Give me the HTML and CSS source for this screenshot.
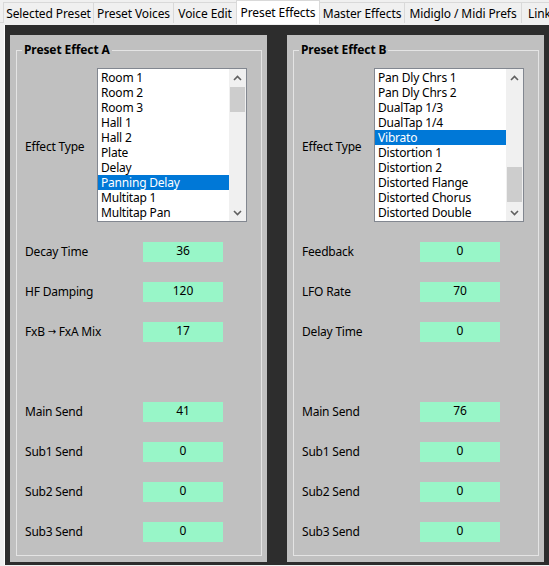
FILE: index.html
```html
<!DOCTYPE html>
<html>
<head>
<meta charset="utf-8">
<link rel="stylesheet" href="styles.css">
</head>
<body>
<div class="tabs">
  <div class="tab t1">Selected Preset</div>
  <div class="tab t2">Preset Voices</div>
  <div class="tab t3">Voice Edit</div>
  <div class="tab t4 active">Preset Effects</div>
  <div class="tab t5">Master Effects</div>
  <div class="tab t6">Midiglo / Midi Prefs</div>
  <div class="tab t7">Link</div>
</div>
<div class="page">
  <div class="frame">
    <div class="dark">
      <div class="panel">
        <fieldset class="group">
          <legend>Preset Effect A</legend>
          <div class="rows">
            <div class="label type">Effect Type</div>
            <div class="listbox">
              <div class="items">
                <div class="item">Room 1</div>
                <div class="item">Room 2</div>
                <div class="item">Room 3</div>
                <div class="item">Hall 1</div>
                <div class="item">Hall 2</div>
                <div class="item">Plate</div>
                <div class="item">Delay</div>
                <div class="item sel">Panning Delay</div>
                <div class="item">Multitap 1</div>
                <div class="item">Multitap Pan</div>
              </div>
              <div class="scrollbar">
                <div class="arrow"><svg width="9" height="6" viewBox="0 0 9 6"><polyline points="1,5 4.5,1.5 8,5" fill="none" stroke="#606060" stroke-width="1.6"/></svg></div>
                <div class="track"><div class="thumb thumb-a"></div></div>
                <div class="arrow"><svg width="9" height="6" viewBox="0 0 9 6"><polyline points="1,1 4.5,4.5 8,1" fill="none" stroke="#606060" stroke-width="1.6"/></svg></div>
              </div>
            </div>
            <div class="label">Decay Time</div><div class="value">36</div>
            <div class="label">HF Damping</div><div class="value">120</div>
            <div class="label">FxB <span class="arr">→</span> FxA Mix</div><div class="value">17</div>
            <div class="label"></div><div></div>
            <div class="label">Main Send</div><div class="value">41</div>
            <div class="label">Sub1 Send</div><div class="value">0</div>
            <div class="label">Sub2 Send</div><div class="value">0</div>
            <div class="label">Sub3 Send</div><div class="value">0</div>
          </div>
        </fieldset>
      </div>
      <div class="panel">
        <fieldset class="group">
          <legend>Preset Effect B</legend>
          <div class="rows">
            <div class="label type">Effect Type</div>
            <div class="listbox">
              <div class="items">
                <div class="item">Pan Dly Chrs 1</div>
                <div class="item">Pan Dly Chrs 2</div>
                <div class="item">DualTap 1/3</div>
                <div class="item">DualTap 1/4</div>
                <div class="item sel">Vibrato</div>
                <div class="item">Distortion 1</div>
                <div class="item">Distortion 2</div>
                <div class="item">Distorted Flange</div>
                <div class="item">Distorted Chorus</div>
                <div class="item">Distorted Double</div>
              </div>
              <div class="scrollbar">
                <div class="arrow"><svg width="9" height="6" viewBox="0 0 9 6"><polyline points="1,5 4.5,1.5 8,5" fill="none" stroke="#606060" stroke-width="1.6"/></svg></div>
                <div class="track"><div class="thumb thumb-b"></div></div>
                <div class="arrow"><svg width="9" height="6" viewBox="0 0 9 6"><polyline points="1,1 4.5,4.5 8,1" fill="none" stroke="#606060" stroke-width="1.6"/></svg></div>
              </div>
            </div>
            <div class="label">Feedback</div><div class="value">0</div>
            <div class="label">LFO Rate</div><div class="value">70</div>
            <div class="label">Delay Time</div><div class="value">0</div>
            <div class="label"></div><div></div>
            <div class="label">Main Send</div><div class="value">76</div>
            <div class="label">Sub1 Send</div><div class="value">0</div>
            <div class="label">Sub2 Send</div><div class="value">0</div>
            <div class="label">Sub3 Send</div><div class="value">0</div>
          </div>
        </fieldset>
      </div>
    </div>
  </div>
</div>
</body>
</html>
```
FILE: styles.css
```css
html, body {
  margin: 0;
  padding: 0;
  height: 566px;
  overflow: hidden;
}
body {
  background: #f0f0f0;
  font-family: "Noto Sans", "Open Sans", sans-serif;
  font-size: 12px;
  color: #000;
}
.tabs {
  display: flex;
  align-items: flex-start;
  height: 23px;
  padding-left: 3px;
  border-bottom: 1px solid #d9d9d9;
  box-sizing: border-box;
  white-space: nowrap;
  position: relative;
  z-index: 1;
}
.tab {
  box-sizing: border-box;
  flex: none;
  margin-top: 2px;
  height: 21px;
  line-height: 21px;
  text-align: center;
  background: #f0f0f0;
  border: 1px solid #d9d9d9;
  border-right: none;
  border-bottom: none;
  letter-spacing: -0.1px;
}
.tab.active {
  margin-top: 0;
  height: 24px;
  line-height: 24px;
  background: #fff;
  border-right: 1px solid #d9d9d9;
}
.tab.active + .tab { border-left: none; }
.t1 { width: 90px; }
.t2 { width: 80px; }
.t3 { width: 63px; }
.t4 { width: 84px; }
.t5 { width: 84px; }
.t6 { width: 117px; }
.t7 { width: 40px; text-align: left; padding-left: 6px; }

.page {
  padding: 2px 0 0 4px;
  background: #f0f0f0;
}
.frame {
  border-left: 1px solid #ffffff;
}
.dark {
  background: #2d2d2d;
  height: 540px;
  box-sizing: border-box;
  padding: 10px 5px 3px 5px;
  display: grid;
  grid-template-columns: 257px 257px;
  column-gap: 20px;
}
.panel {
  background: #c0c0c0;
  padding: 7px 5px 6px 6px;
  display: flex;
}
.group {
  flex: 1;
  margin: 0;
  padding: 10px 0 12px 8px;
  border: 1px solid #e4e4e4;
  min-width: 0;
}
.group legend {
  font-weight: bold;
  font-size: 12px;
  line-height: 16px;
  padding: 0 2px;
  margin-left: -3px;
  color: #000;
  letter-spacing: -0.1px;
}
.rows {
  display: grid;
  grid-template-columns: 72px 150px;
  grid-template-rows: 154px;
  grid-auto-rows: 20px;
  row-gap: 20px;
  align-items: center;
}
.label {
  white-space: nowrap;
  letter-spacing: -0.2px;
  padding-bottom: 2px;
}
.label.type {
  padding-bottom: 0;
  padding-top: 2px;
}
.arr {
  font-family: "DejaVu Sans", sans-serif;
  font-size: 10px;
  position: relative;
  top: -1px;
}
.value {
  margin-left: 46px;
  width: 80px;
  height: 20px;
  line-height: 18px;
  background: #98f6c8;
  text-align: center;
}
.listbox {
  height: 154px;
  box-sizing: border-box;
  border: 1px solid #828790;
  background: #fff;
  padding: 1px 0 1px 0;
  display: flex;
  align-self: start;
}
.items {
  flex: 1;
}
.item {
  height: 15px;
  line-height: 16px;
  padding-left: 3px;
  white-space: nowrap;
  letter-spacing: -0.2px;
  overflow: hidden;
}
.item.sel {
  background: #0078d7;
  color: #fff;
}
.scrollbar {
  width: 17px;
  background: #f0f0f0;
  display: flex;
  flex-direction: column;
  margin-top: -1px;
  margin-bottom: -1px;
}
.arrow {
  height: 17px;
  display: flex;
  align-items: center;
  justify-content: center;
}
.track {
  flex: 1;
  padding: 0 1px;
}
.thumb {
  background: #cdcdcd;
}
.thumb-a { margin-top: 1px; height: 25px; }
.thumb-b { margin-top: 81px; height: 35px; }
```
